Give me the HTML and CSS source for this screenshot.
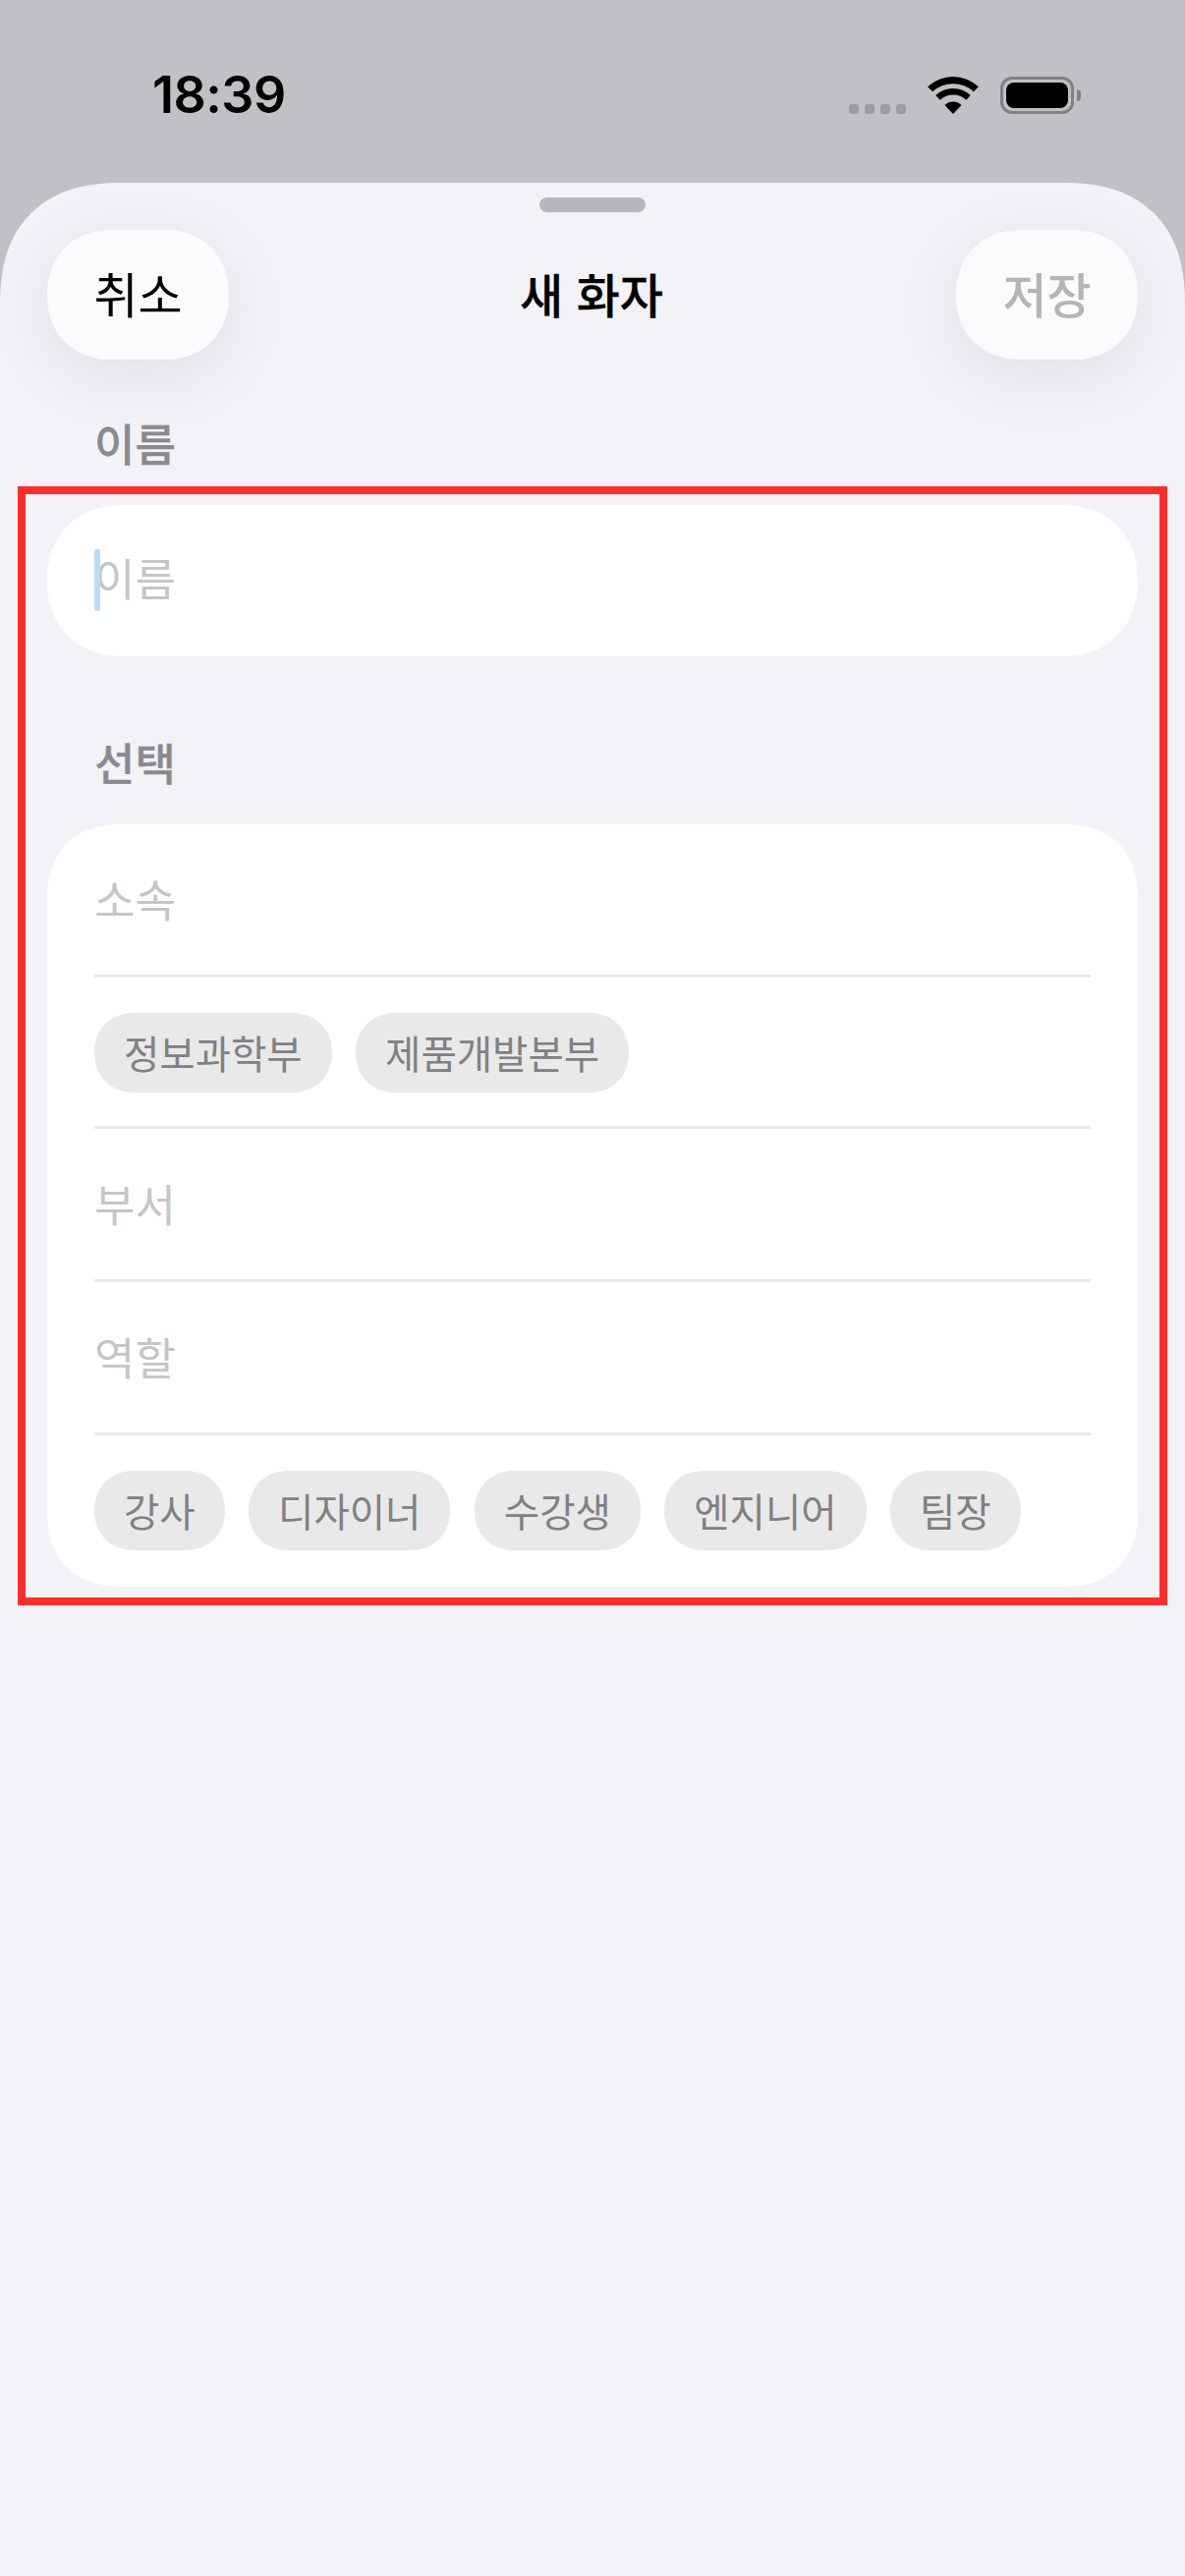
FILE: index.html
```html
<!DOCTYPE html>
<html lang="ko">
<head>
<meta charset="utf-8">
<title>새 화자</title>
<link rel="stylesheet" href="styles.css">
</head>
<body>
<div class="screen">
  <header class="status">
    <span class="time">18:39</span>
    <div class="status-icons">
      <div class="signal"><i></i><i></i><i></i><i></i></div>
      <svg class="wifi" width="52" height="38" viewBox="0 0 52 38">
        <path d="M0.1 10.2A38 38 0 0 1 51.9 10.2L46.9 15.3A31 31 0 0 0 5.1 15.3Z"/>
        <path d="M8.3 19A26 26 0 0 1 43.7 19L39.3 23.7A19.5 19.5 0 0 0 12.7 23.7Z"/>
        <path d="M17.5 28.9A12.5 12.5 0 0 1 34.5 28.9L26 38Z"/>
      </svg>
      <div class="battery"><div class="battery-body"><div class="battery-fill"></div></div><div class="battery-nub"></div></div>
    </div>
  </header>
  <main class="sheet">
    <div class="handle"></div>
    <div class="nav">
      <button class="pill cancel">취소</button>
      <h1 class="title">새 화자</h1>
      <button class="pill save">저장</button>
    </div>
    <div class="label first-label">이름</div>
    <section class="marked">
      <div class="card name-card">
        <span class="caret"></span>
        <span class="placeholder">이름</span>
      </div>
      <div class="label second-label">선택</div>
      <div class="card fields">
        <div class="row"><span class="placeholder">소속</span></div>
        <div class="row chips">
          <span class="chip">정보과학부</span>
          <span class="chip">제품개발본부</span>
        </div>
        <div class="row"><span class="placeholder">부서</span></div>
        <div class="row"><span class="placeholder">역할</span></div>
        <div class="row chips last">
          <span class="chip">강사</span>
          <span class="chip">디자이너</span>
          <span class="chip">수강생</span>
          <span class="chip">엔지니어</span>
          <span class="chip">팀장</span>
        </div>
      </div>
    </section>
  </main>
</div>
</body>
</html>
```
FILE: styles.css
```css
* { box-sizing: border-box; }
html, body { margin: 0; padding: 0; }
body {
  width: 1206px;
  height: 2622px;
  overflow: hidden;
  background: #c1c0c5;
  font-family: "Noto Sans CJK KR", "Noto Sans", sans-serif;
}
.screen { display: flex; flex-direction: column; height: 2622px; }

/* status bar */
.status {
  height: 186px;
  flex: none;
  display: flex;
  justify-content: space-between;
  padding: 67px 106px 0 155px;
}
.time {
  font-family: Inter, sans-serif;
  font-weight: 600;
  font-size: 52px;
  line-height: 60px;
  color: #000;
  letter-spacing: -0.5px;
}
.status-icons { display: flex; align-items: flex-start; padding-top: 11px; }
.signal { display: flex; gap: 6px; margin-top: 28px; margin-right: 22px; }
.signal i { width: 10px; height: 10px; border-radius: 3px; background: #9d9d9f; display: block; }
.wifi { display: block; fill: #000; margin-right: 22px; }
.battery { display: flex; align-items: center; height: 38px; }
.battery-body {
  width: 75px;
  height: 38px;
  border: 3px solid #808085;
  border-radius: 12px;
  padding: 3px;
}
.battery-fill { width: 100%; height: 100%; background: #000; border-radius: 8px; }
.battery-nub {
  width: 4px;
  height: 12px;
  margin-left: 3px;
  background: #808085;
  border-radius: 0 6px 6px 0;
}

/* sheet */
.sheet {
  flex: 1;
  background: #f2f2f7;
  border-radius: 124px 124px 0 0;
  corner-shape: superellipse(1.25);
  overflow: hidden;
  display: flex;
  flex-direction: column;
  padding-top: 15px;
}
.handle {
  width: 108px;
  height: 15px;
  border-radius: 8px;
  background: #b6b6bb;
  align-self: center;
  flex: none;
}
.nav {
  display: flex;
  justify-content: space-between;
  align-items: center;
  padding: 0 48px;
  margin-top: 18px;
  height: 132px;
  flex: none;
}
.pill {
  width: 185px;
  height: 132px;
  border: 0;
  border-radius: 66px;
  corner-shape: superellipse(1.12);
  background: #fbfbfe;
  box-shadow: 0 16px 70px rgba(0, 0, 0, 0.08);
  font-family: inherit;
  font-size: 49px;
  padding: 0 0 5px;
  line-height: 1;
}
.cancel { color: #000; }
.save { color: #b5b5b8; font-weight: 500; }
.title {
  margin: 0 2px 5px 0;
  font-size: 48px;
  font-weight: 500;
  -webkit-text-stroke: 0.3px #000;
  line-height: 60px;
  color: #000;
}
.label {
  font-size: 45px;
  font-weight: 500;
  -webkit-text-stroke: 0.3px #8a8a8e;
  line-height: 60px;
  color: #8a8a8e;
  padding-left: 96px;
  flex: none;
}
.first-label { margin-top: 55px; }

/* annotated region */
.marked {
  margin: 14px 18px 0;
  border: 8px solid #ff2d2a;
  padding: 11px 22px;
  flex: none;
}
.second-label { padding-left: 48px; margin-top: 78px; }

.card { background: #fff; width: 1110px; }
.name-card {
  height: 154px;
  border-radius: 77px;
  corner-shape: superellipse(1.12);
  padding: 0 48px 6px;
  display: flex;
  align-items: center;
  position: relative;
}
.caret {
  position: absolute;
  left: 48px;
  top: 45px;
  width: 6px;
  height: 63px;
  border-radius: 3px;
  background: #b9dcfb;
}
.placeholder {
  font-size: 45px;
  color: #c5c5c7;
  line-height: 60px;
}
.second-label + .fields { margin-top: 33px; }
.fields {
  border-radius: 78px;
  corner-shape: superellipse(1.25);
  padding: 0 48px;
  display: flex;
  flex-direction: column;
}
.row {
  height: 156px;
  display: flex;
  align-items: center;
  padding-bottom: 2px;
  border-bottom: 3px solid #e8e8e9;
  flex: none;
}
.chips {
  gap: 24.4px;
  height: 154px;
  align-items: flex-start;
  padding: 36px 0 0;
}
.chips.last { border-bottom: 0; }
.chip {
  height: 81px;
  padding: 0 30px;
  border-radius: 40.5px;
  corner-shape: superellipse(1.1);
  background: #e9e9e9;
  color: #808084;
  font-size: 39.5px;
  line-height: 79px;
  white-space: nowrap;
}
```
